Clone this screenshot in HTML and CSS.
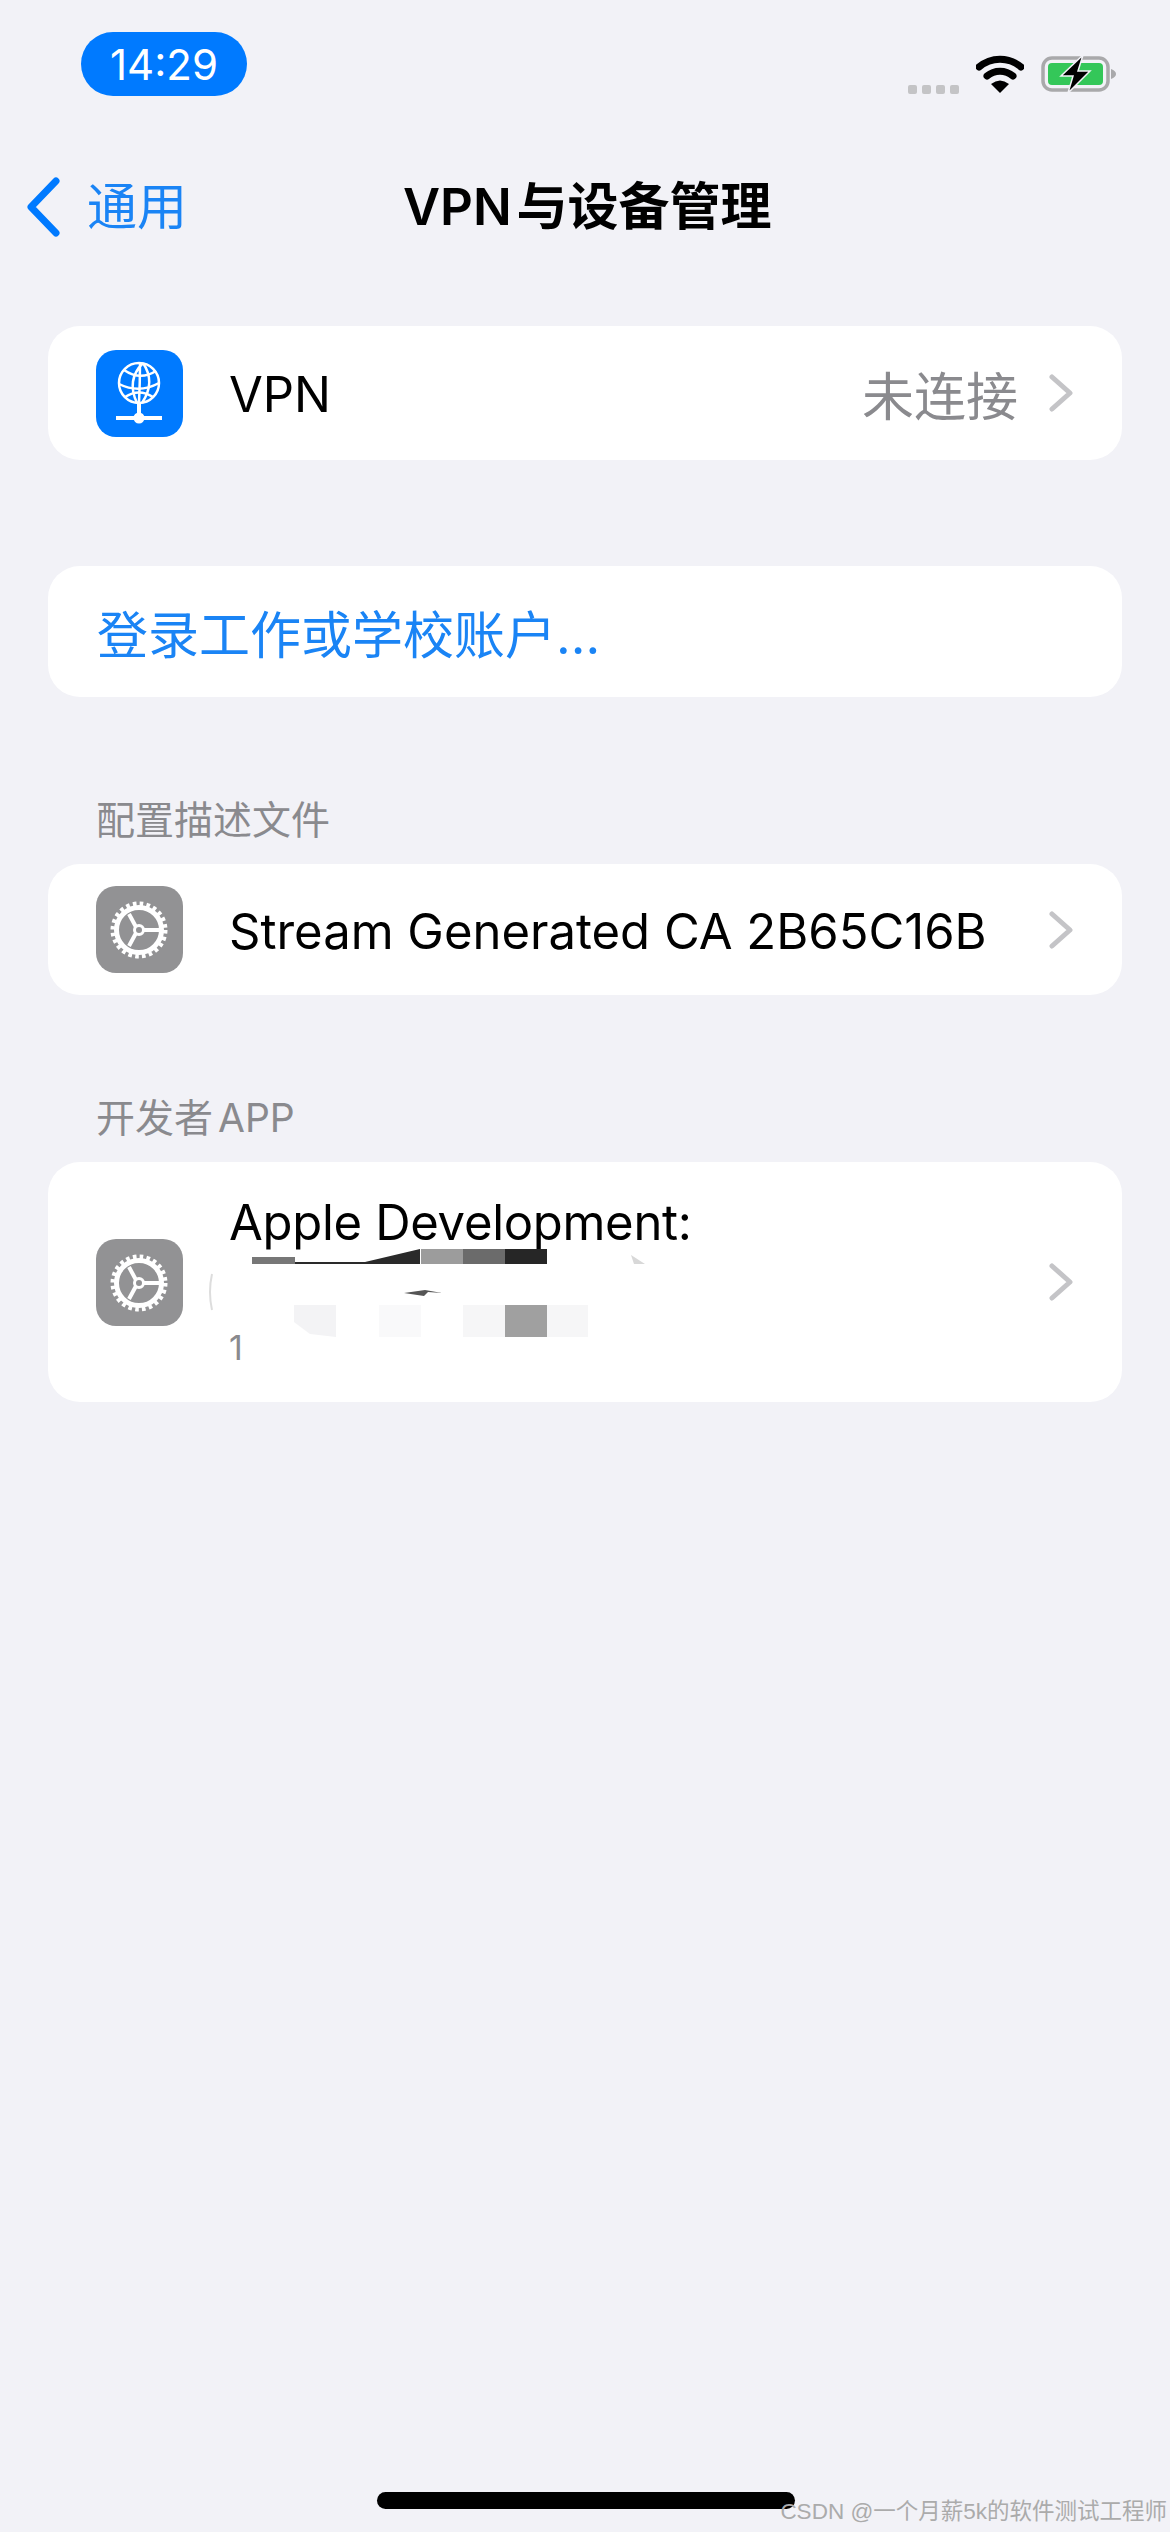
FILE: index.html
```html
<!DOCTYPE html>
<html lang="zh-CN">
<head>
    <meta charset="UTF-8">
    <meta name="viewport" content="width=device-width, initial-scale=1.0">
    <title>VPN与设备管理</title>
    <link rel="stylesheet" href="styles.css">
</head>
<body>
<div class="page">

    <div class="status-bar">
        <div class="time-pill">14:29</div>
        <div class="status-icons">
            <div class="signal-dots"><span></span><span></span><span></span><span></span></div>
            <svg class="wifi" viewBox="0 0 48 40" width="48" height="40">
                <path d="M3 13A32 32 0 0 1 45 13M11 22A20 20 0 0 1 37 22" fill="none" stroke="#000" stroke-width="7" stroke-linecap="round"/>
                <path d="M15 30Q24 23 33 30L24 39Z" fill="#000"/>
            </svg>
            <svg class="battery" viewBox="0 0 76 38" width="76" height="38">
                <rect x="2" y="3" width="65" height="32" rx="9" fill="none" stroke="#a9a9ab" stroke-width="3.5"/>
                <rect x="7" y="8" width="55" height="22" rx="4" fill="#34c759"/>
                <path d="M70 14q5 2 5 5t-5 5z" fill="#a9a9ab"/>
                <path d="M42 0L20 21H32L27 38L49 16H37Z" fill="#000" stroke="#f2f2f7" stroke-width="1.5"/>
            </svg>
        </div>
    </div>

    <div class="nav">
        <div class="nav-back">
            <svg viewBox="0 0 36 60" width="36" height="60">
                <path d="M31 4L6 30L31 56" fill="none" stroke="#007aff" stroke-width="7" stroke-linecap="round" stroke-linejoin="round"/>
            </svg>
            <span class="nav-back-label">通用</span>
        </div>
        <div class="nav-title">VPN 与设备管理</div>
    </div>

    <div class="card first-card">
        <div class="row row-vpn">
            <div class="app-icon blue">
                <svg viewBox="0 0 87 87" width="87" height="87" fill="none" stroke="#fff" stroke-width="2.5">
                    <circle cx="43" cy="33" r="20"/>
                    <path d="M47 13Q30 30 41 53M47 13Q60 32 46 53M44 13Q44 32 43 53"/>
                    <path d="M28 20Q44 31 60 21M23 34Q43 44 63 33M29 47Q43 38 57 47"/>
                    <path d="M43 53V68M20 68H66" stroke-width="4"/>
                    <circle cx="43" cy="68" r="5.5" fill="#fff" stroke="none"/>
                </svg>
            </div>
            <div class="row-title">VPN</div>
            <div class="row-value">未连接</div>
            <svg class="chevron" viewBox="0 0 26 38" width="26" height="38"><path d="M4 3L22 19L4 35"/></svg>
        </div>
    </div>

    <div class="card login-card">
        <div class="login-link">登录工作或学校账户...</div>
    </div>

    <div class="section-label">配置描述文件</div>
    <div class="card">
        <div class="row row-profile">
            <div class="app-icon grey">
                <svg viewBox="0 0 87 87" width="87" height="87" fill="none" stroke="#fff">
                    <circle cx="43" cy="44" r="22.5" stroke-width="5"/>
                    <circle cx="43" cy="44" r="26" stroke-width="5" stroke-dasharray="3.6 3.2"/>
                    <circle cx="43" cy="44" r="4.5" stroke-width="3"/>
                    <path d="M40 41L33 28M48 44H65M40 47L33 60" stroke-width="4"/>
                </svg>
            </div>
            <div class="row-title">Stream Generated CA 2B65C16B</div>
            <svg class="chevron" viewBox="0 0 26 38" width="26" height="38"><path d="M4 3L22 19L4 35"/></svg>
        </div>
    </div>

    <div class="section-label">开发者 APP</div>
    <div class="card">
        <div class="row row-dev">
            <div class="app-icon grey">
                <svg viewBox="0 0 87 87" width="87" height="87" fill="none" stroke="#fff">
                    <circle cx="43" cy="44" r="22.5" stroke-width="5"/>
                    <circle cx="43" cy="44" r="26" stroke-width="5" stroke-dasharray="3.6 3.2"/>
                    <circle cx="43" cy="44" r="4.5" stroke-width="3"/>
                    <path d="M40 41L33 28M48 44H65M40 47L33 60" stroke-width="4"/>
                </svg>
            </div>
            <div class="dev-text">
                <div class="row-title">Apple Development:</div>
                <!-- bande floutee du nom masque -->
                <svg class="mosaic" viewBox="209 1247 450 88" width="450" height="88">
                    <path d="M252 1255H280L295 1260H365L420 1247V1262H252Z" fill="#2a2a2a"/>
                    <rect x="252" y="1255" width="43" height="7" fill="#777"/>
                    <rect x="421" y="1247" width="42" height="15" fill="#9c9c9c"/>
                    <rect x="463" y="1247" width="42" height="15" fill="#6b6b6b"/>
                    <rect x="505" y="1247" width="42" height="15" fill="#262626"/>
                    <path d="M631 1253L645 1262H634Z" fill="#d8d8d8"/>
                    <path d="M404 1291L425 1288L442 1291L428 1290L424 1294Z" fill="#555"/>
                    <path d="M212 1272Q208 1290 212 1308" fill="none" stroke="#ddd" stroke-width="2"/>
                    <path d="M294 1303H336V1335L310 1332L294 1320Z" fill="#f3f3f5"/>
                    <rect x="379" y="1303" width="42" height="32" fill="#f9f9fa"/>
                    <rect x="463" y="1303" width="42" height="32" fill="#f6f6f7"/>
                    <rect x="505" y="1303" width="42" height="32" fill="#a0a0a0"/>
                    <rect x="547" y="1303" width="41" height="32" fill="#f6f6f7"/>
                </svg>
                <div class="dev-count">1</div>
            </div>
            <svg class="chevron" viewBox="0 0 26 38" width="26" height="38"><path d="M4 3L22 19L4 35"/></svg>
        </div>
    </div>

    <div class="home-bar"></div>
    <div class="watermark">CSDN @一个月薪5k的软件测试工程师</div>
</div>
</body>
</html>
```

FILE: styles.css
```css
* {
    box-sizing: border-box;
}
body {
    margin: 0;
    font-family: Inter, "Noto Sans CJK SC", sans-serif;
    color: #000;
}
.page {
    position: relative;
    width: 1170px;
    height: 2532px;
    background-color: #f2f2f7;
    overflow: hidden;
    display: flex;
    flex-direction: column;
}

/* barre de statut */
.status-bar {
    height: 150px;
    padding: 32px 53px 0 81px;
    display: flex;
    justify-content: space-between;
    align-items: flex-start;
}
.time-pill {
    width: 166px;
    height: 64px;
    border-radius: 32px;
    background-color: #007aff;
    color: white;
    font-size: 42px;
    font-weight: 400;
    display: flex;
    align-items: center;
    justify-content: center;
}
.status-icons {
    margin-top: 22px;
    display: flex;
    align-items: center;
    gap: 17px;
}
.signal-dots {
    display: flex;
    gap: 5px;
    align-self: flex-end;
}
.signal-dots span {
    width: 9px;
    height: 9px;
    border-radius: 2px;
    background-color: #c4c4c6;
}

/* navigation */
.nav {
    position: relative;
    height: 114px;
    padding-left: 25px;
    display: flex;
    align-items: center;
}
.nav-back {
    display: flex;
    align-items: center;
    gap: 26px;
    color: #1a84f5;
    font-size: 50px;
}
.nav-back-label {
    line-height: 50px;
}
.nav-title {
    position: absolute;
    left: 403px;
    top: 24px;
    font-size: 51px;
    font-weight: 600;
    line-height: 66px;
    word-spacing: -8px;
    white-space: nowrap;
}

/* cartes */
.card {
    margin: 0 48px;
    background-color: white;
    border-radius: 32px;
}
.first-card {
    margin-top: 62px;
}
.login-card {
    margin-top: 106px;
    height: 131px;
    padding-left: 49px;
    display: flex;
    align-items: center;
}
.login-link {
    color: #1a84f5;
    font-size: 51px;
}
.section-label {
    margin: 98px 48px 19px;
    padding-left: 48px;
    height: 50px;
    line-height: 50px;
    font-size: 39px;
    word-spacing: -6px;
    color: #8a8a8e;
}

.row {
    padding: 0 48px;
    display: flex;
    align-items: center;
}
.row-vpn {
    height: 134px;
}
.row-profile {
    height: 131px;
}
.row-dev {
    height: 240px;
}
.app-icon {
    flex: none;
    width: 87px;
    height: 87px;
    border-radius: 20px;
    margin-right: 46px;
}
.app-icon svg {
    display: block;
}
.blue {
    background-color: #007aff;
}
.grey {
    background-color: #929294;
}
.row-title {
    padding-top: 4px;
    font-size: 49px;
    line-height: 56px;
    white-space: nowrap;
}
.row-dev .row-title {
    margin-top: -2px;
    letter-spacing: -0.3px;
}
.row-value {
    margin-left: auto;
    margin-right: 30px;
    font-size: 52px;
    color: #8a8a8e;
}
.chevron {
    flex: none;
    fill: none;
    stroke: #c4c4c7;
    stroke-width: 5;
    stroke-linecap: round;
    stroke-linejoin: round;
}
.row-profile .chevron,
.row-dev .chevron {
    margin-left: auto;
}
.dev-text {
    height: 178px;
}
.mosaic {
    display: block;
    margin-top: -2px;
    margin-left: -20px;
}
.dev-count {
    height: 25px;
    line-height: 21px;
    font-size: 34px;
    color: #8a8a8e;
}

.home-bar {
    margin: auto 375px 23px 377px;
    height: 17px;
    border-radius: 9px;
    background-color: black;
}
.watermark {
    position: absolute;
    right: 3px;
    bottom: 8px;
    font-family: "Liberation Sans", "Noto Sans CJK SC", sans-serif;
    font-size: 22.5px;
    line-height: 24px;
    color: #ababab;
    white-space: nowrap;
}
```
